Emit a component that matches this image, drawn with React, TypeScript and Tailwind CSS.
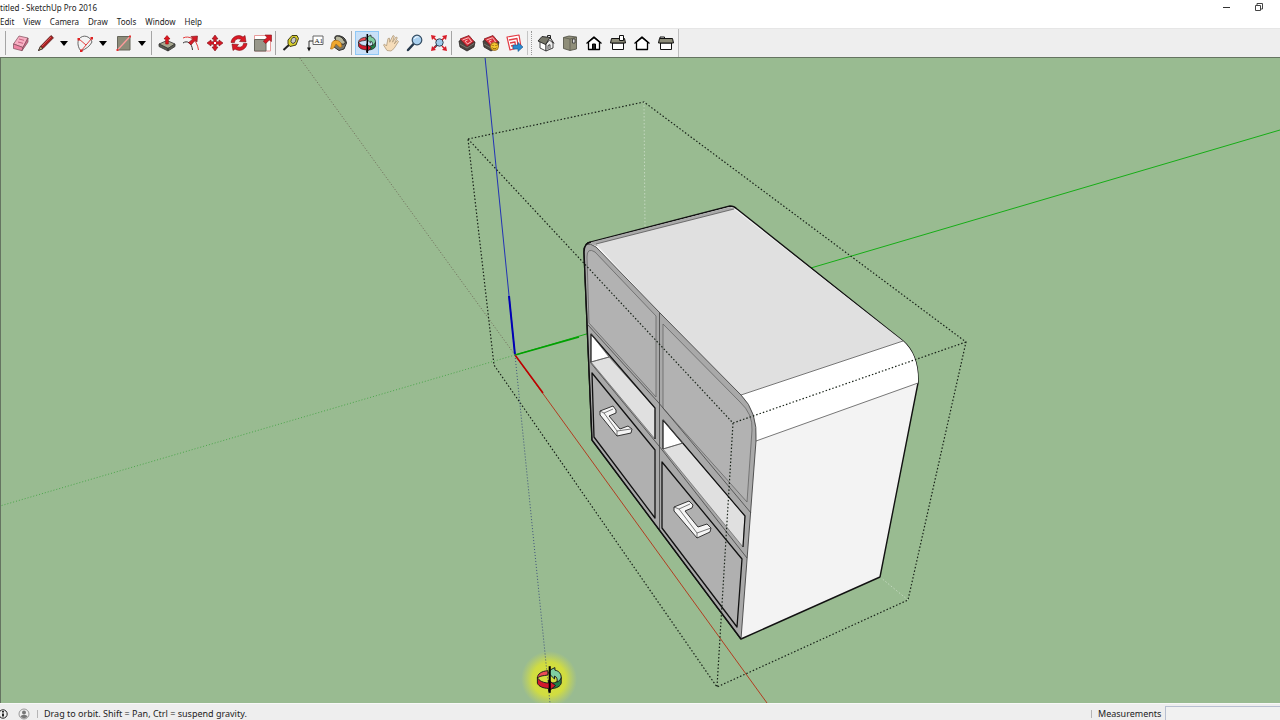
import type { ReactNode } from "react";

const menus = ["Edit", "View", "Camera", "Draw", "Tools", "Window", "Help"];

type ToolProps = { label: string; active?: boolean; children: ReactNode };

function Tool({ label, active, children }: ToolProps) {
  return (
    <button
      aria-label={label}
      className={
        active
          ? "h-6 w-6 shrink-0 border border-[#90c8f6] bg-[#c9e0f7]"
          : "h-6 w-6 shrink-0 border border-transparent hover:bg-[#d8e6f2]"
      }
    >
      <svg viewBox="1 1 22 22" className="block h-full w-full" fill="none" strokeLinejoin="round">
        {children}
      </svg>
    </button>
  );
}

function DropArrow({ label }: { label: string }) {
  return (
    <button aria-label={label} className="flex h-6 w-3 shrink-0 items-center justify-center">
      <svg viewBox="0 0 8 5" className="h-[5px] w-2">
        <path d="M0 0h8L4 5Z" fill="#000" />
      </svg>
    </button>
  );
}

function Divider() {
  return (
    <div className="flex h-6 w-1 shrink-0">
      <div className="h-6 w-px bg-[#a5a5a5]" />
    </div>
  );
}

function OrbitGlyph() {
  return (
    <g stroke="#1c1c1c" strokeWidth=".7">
      <path d="M20.500 11v4c-.5 2.500-3.500 3.800-7 4v-3.800c3-.3 6-1.500 7-4.200Z" fill="#238048" />
      <path d="M13 5.500 16 4v1.800c2.800.6 4.500 2.500 4.500 5.200-.3 1.600-1.500 2.700-3 3.300 .5-2-.2-3.800-1.800-4.200v2L11.500 8Z" fill="#7fd0a2" />
      <path d="M11 6.200C6.500 6.500 3.500 8.500 3.500 11.500c1-1.200 4-1.800 5-1.800l2.500-.5Z" fill="#ee4b55" />
      <path d="M3.500 11v4.200c1 2.300 4 3.500 8 3.700V21l5-4.200-5-3.800v2C8 15 4.500 13.500 3.500 11Z" fill="#d3182c" />
      <path d="M12.300 3v19" stroke="#000" strokeWidth="1.500" />
    </g>
  );
}

function HouseView({ open }: { open?: boolean }) {
  return (
    <g stroke="#000" strokeWidth="1.300">
      <path d="M6.500 11v7.500h11V11L12 6.500Z" fill="#fff" />
      <path d="M4.500 12.500 12 6l7.500 6.500" />
      {open && <path d="M10.500 18.500V13h3v5.500Z" fill="#222" strokeWidth="1" />}
    </g>
  );
}

function SideView({ chimney }: { chimney?: boolean }) {
  return (
    <g stroke="#111" strokeWidth="1">
      <path d="M6.500 12h11v6.500h-11Z" fill="#fff" />
      <path d="M5.500 7.500h13l1 4.500h-15Z" fill="#8d8c79" />
      {chimney ? <path d="M13.500 4.500h4v5h-4Z" fill="#fff" /> : <path d="M6 7.500V6h4.500v1.500" />}
    </g>
  );
}

function WarehouseBox() {
  return (
    <g>
      <path d="m4 10 9-3 7 4-1 5-7 4-7-4Z" fill="#4a4540" stroke="#2a2624" strokeWidth=".8" />
      <path d="m5 8 9-3.500 5 6-7 5Z" fill="#d9303a" stroke="#7e1a20" strokeWidth=".8" />
      <path d="m7.500 9 6-2.300 3 3.800-4 2.500-2.500-2.800 2.500-1" stroke="#ffd3d3" strokeWidth=".9" />
      <path d="m5 13 7 4 7-4.500" stroke="#8b867e" strokeWidth=".7" />
    </g>
  );
}

function Toolbar() {
  return (
    <div className="flex h-[29px] shrink-0 border-t border-[#e6e6e6] bg-[#eee]">
      <div className="flex items-center border-r border-[#bdbdbd] bg-[#f3f3f3] pl-[5px]">
        <Divider />
        <Tool label="Eraser">
          <path d="m4.500 13 5.500-8 9 2-5 9.500Z" fill="#f8afc3" stroke="#7c4a58" strokeWidth=".7" />
          <path d="M4.500 13v4.500l8.500 2.200 1-3.200Z" fill="#f084a4" stroke="#7c4a58" strokeWidth=".7" />
          <path d="m14 16.500-1 3.200L19 11V7Z" fill="#d66f90" stroke="#7c4a58" strokeWidth=".7" />
          <path d="m10 8 5 1.300M9 11l5 1.300" stroke="#b94c6e" strokeWidth=".8" />
        </Tool>
        <div className="flex pl-px">
          <Tool label="Line">
            <path d="m4.500 19.500 2-4.200L17 4.500l2.500 2.300L9 17.500Z" fill="#a92020" stroke="#411" strokeWidth=".7" />
            <path d="m4.500 19.500 2-4.200L9 17.500Z" fill="#ceb178" stroke="#222" strokeWidth=".7" />
            <path d="m8 15 9-9" stroke="#e66" strokeWidth=".7" />
          </Tool>
          <DropArrow label="Line tools" />
        </div>
        <div className="flex pl-[3px]">
          <Tool label="Arc">
            <path d="M6 8c4-5 11-3 13 3-2 4-6 7-11 9" stroke="#444" strokeWidth=".8" />
            <path d="M6 8c-2 3-1 9 2 12" stroke="#444" strokeWidth=".8" />
            <path d="M19 7 8 20M6 8l7 6" stroke="#e34040" />
            <path d="M4.500 7H7v2.500H4.500ZM17.500 6H20v2.500h-2.500ZM7 18.500h2.500V21H7Z" fill="#d22" />
          </Tool>
          <DropArrow label="Arc tools" />
        </div>
        <div className="flex pl-[3px]">
          <Tool label="Rectangle">
            <path d="M5.500 5.500H18V19H5.500Z" fill="#8d8c79" stroke="#66665b" />
            <path d="M5.500 19 18 5.500" stroke="#ff9b9b" strokeWidth="1.300" />
            <path d="M4.500 18h2v2h-2ZM17 4.500h2v2h-2Z" fill="#e43131" />
          </Tool>
          <DropArrow label="Shape tools" />
        </div>
        <div className="pl-[3px]">
          <Divider />
        </div>

        <Tool label="Push/Pull">
          <path d="m4 13 8-3.500 8 3.500-7 4.500Z" fill="#a7a78f" stroke="#333" strokeWidth=".8" />
          <path d="M4 13v2.500l9 4.500v-2.500ZM20 13v2.500L13 20v-2.500Z" fill="#5c5d50" stroke="#333" strokeWidth=".8" />
          <path d="m12 4.500 3 3.500h-1.700v5h-2.600V8H9Z" fill="#e01722" stroke="#900" strokeWidth=".6" />
        </Tool>
        <Tool label="Offset">
          <path d="M4 7c6-3 14 1 15.500 12" stroke="#e33b3b" strokeWidth="1" />
          <path d="M4 12c4-3 9 0 9.500 7" stroke="#333" strokeWidth="1" />
          <path d="m18.500 5-.5 6-2-1.500-4 4.500-2.500-2.300 4.500-4L12 5.500Z" fill="#d51c26" stroke="#7a1018" strokeWidth=".6" />
        </Tool>
        <Tool label="Move">
          <path d="m12 4 3 4h-1.700v2.700H16V9l4 3-4 3v-1.700h-2.700V16H15l-3 4-3-4h1.700v-2.700H8V15l-4-3 4-3v1.700h2.700V8H9Z" fill="#d61925" stroke="#7d1118" strokeWidth=".6" />
          <path d="M11 11h2v2h-2Z" fill="#fff" />
        </Tool>
        <Tool label="Rotate">
          <path d="M4 11.500C4.500 6 11 2.500 16 6l2-1.500 1 6.500-6.500-.5 1.800-2C11 7 8 8 7.500 11.500Z" fill="#da1925" stroke="#801218" strokeWidth=".6" />
          <path d="M20 12.500C19.500 18 13 21.500 8 18l-2 1.500L5 13l6.500.5-1.800 2C13 17 16 16 16.500 12.500Z" fill="#da1925" stroke="#801218" strokeWidth=".6" />
        </Tool>
        <Tool label="Scale">
          <path d="M3.500 4.500h16v15.500h-16Z" stroke="#e79a9a" fill="#fff" />
          <path d="M3.500 8.500H15V20H3.500Z" fill="#98978a" stroke="#66665c" />
          <path d="M20.500 4v6.500L18.300 9l-3.500 3.500-2.500-2.300L16 6.500 14 4Z" fill="#d61a25" stroke="#831118" strokeWidth=".6" />
        </Tool>
        <Divider />

        <Tool label="Tape Measure">
          <path d="m11 13-6.500 6" stroke="#222" strokeWidth="2" />
          <path d="m9 9 4-4.500h5l1.500 3-2.500 6.500-6 1.500L9 13Z" fill="#d9cf2c" stroke="#33300c" strokeWidth=".9" />
          <ellipse cx="14.500" cy="9.300" rx="2.300" ry="3.200" transform="rotate(25 14.500 9.300)" fill="#c9c9c4" stroke="#333" strokeWidth=".8" />
        </Tool>
        <Tool label="Text">
          <path d="M10 5h10v8.500H10Z" fill="#fff" stroke="#666" />
          <path d="M10 10H6v7" stroke="#333" />
          <path d="m4 16.500 2 4 2-4Z" fill="#111" />
          <text x="11.500" y="11.800" fontSize="7" fontFamily="Liberation Serif, serif" fill="#111">A1</text>
        </Tool>
        <Tool label="Paint Bucket">
          <path d="m7 10 5-5c4 0 7 3 7.500 7L17 18l-5 1.500L7 16Z" fill="#77766a" stroke="#222" strokeWidth=".9" />
          <ellipse cx="13" cy="9" rx="6" ry="3" transform="rotate(35 13 9)" fill="#b7b69d" stroke="#222" strokeWidth=".9" />
          <path d="M14 12c-2-3-7-4-9-.5L3.500 18c3.500.5 4-2.500 5.500-5l4 3.500 2-1Z" fill="#efa72d" stroke="#a26512" strokeWidth=".6" />
          <path d="M8 8c1-5 7-4 9 2" stroke="#333" strokeWidth=".9" />
        </Tool>
        <Divider />

        <Tool label="Orbit" active>
          <OrbitGlyph />
        </Tool>
        <Tool label="Pan">
          <path d="M8 19.500 4.500 14c.5-1.500 2-.5 3 1L9 7.500l1.500-.3.2 4L14 4.500l1.300.7-1.800 6L17 6l1.300.7-3 6.200 3-3.400 1.200 1-4.500 7-3 2.500Z" fill="#f5dcb9" stroke="#b09a7c" strokeWidth=".8" />
        </Tool>
        <Tool label="Zoom">
          <path d="m5 19 5.500-6" stroke="#26394c" strokeWidth="2.500" strokeLinecap="round" />
          <circle cx="14" cy="9" r="4.800" fill="#a9d0ef" stroke="#344c62" strokeWidth="1.200" />
          <path d="M11.500 8c.5-2 2-2.500 4-2" stroke="#fff" />
        </Tool>
        <Tool label="Zoom Extents">
          <path d="m7 17 4-4" stroke="#31495c" strokeWidth="2" />
          <circle cx="12.500" cy="11.500" r="3.700" fill="#9fcbeb" stroke="#345" />
          <path d="m4 4 5 1-1.500 1.500 2 2-1 1-2-2L5 9ZM20 4l-5 1 1.500 1.500-2 2 1 1 2-2L19 9ZM4 20l1-5 1.500 1.500 2-2 1 1-2 2L9 19ZM20 20l-5-1 1.500-1.500-2-2 1-1 2 2L19 15Z" fill="#d81d29" />
        </Tool>
        <Divider />

        <Tool label="3D Warehouse">
          <WarehouseBox />
        </Tool>
        <Tool label="Share Model">
          <WarehouseBox />
          <circle cx="15.500" cy="15.500" r="4" fill="#f5c52f" stroke="#8b5d13" strokeWidth=".8" />
          <path d="M14 14v1M17 14v1M13.500 16.800c1 1.300 3 1.300 4 0" stroke="#553300" strokeWidth=".8" />
        </Tool>
        <Tool label="Extension Warehouse">
          <path d="m4 6 12-2 2 12-11 3Z" fill="#fff" stroke="#e33c45" strokeWidth="1.200" />
          <path d="m6 9 8-1.500 1 7M7 12l5-1 .5 6M8 15l2-.5.5 3.500" stroke="#e33c45" strokeWidth="1.300" />
          <path d="M10 14h5v-2.500l5 4.500-5 4.500V18h-5Z" fill="#2b89cf" stroke="#17568a" strokeWidth=".6" />
        </Tool>
        <div className="flex h-6 w-[7px] shrink-0 justify-between pr-0.5">
          <div className="w-px bg-[#c5c5c5]" />
          <div className="w-px border-l border-dotted border-[#999]" />
        </div>

        <Tool label="Iso View">
          <path d="m6 10 6 3v7l-6-3Z" fill="#fff" stroke="#333" strokeWidth=".9" />
          <path d="m12 13 3.500-4 3.500 3v5l-7 3Z" fill="#eee" stroke="#333" strokeWidth=".9" />
          <path d="m4 10 4-4.500 8 1-4.500 7Z" fill="#77776a" stroke="#222" strokeWidth=".9" />
          <path d="m16 6.500 4 6M13.500 6V4.500h3V8" stroke="#222" strokeWidth="1" />
          <path d="m14 18.500v-4l2-.8v4" stroke="#333" strokeWidth=".9" />
        </Tool>
        <Tool label="Top View">
          <path d="M5.500 6.500 11 5l7.500 1v12L12 19.500l-6.500-2Z" fill="#8f8e79" stroke="#4c4c41" strokeWidth=".8" />
          <path d="M12 8v11.500M5.500 6.500 12 8l6.500-2" stroke="#5e5e50" strokeWidth=".8" />
          <path d="M14.500 8h2.500v4h-2.500Z" fill="#ddd" stroke="#333" strokeWidth=".8" />
        </Tool>
        <Tool label="Front View">
          <HouseView open />
        </Tool>
        <Tool label="Right View">
          <SideView chimney />
        </Tool>
        <Tool label="Back View">
          <HouseView />
        </Tool>
        <Tool label="Left View">
          <SideView />
        </Tool>
      </div>
    </div>
  );
}

function Cabinet() {
  return (
    <g strokeLinejoin="round">
      {/* outer shell */}
      <path d="M592 440 584 252Q584 243 591 242L730 206Q734 206 737 209L903 341Q919 355 918 383L880 577 741 639Z" fill="#f3f3f3" stroke="#111" strokeWidth="1.400" />
      <path d="M588 243 730 207 735 209 597 246Z" fill="#aaa" />
      <path d="M596 244 734 209 903 341 741 395 660 313Z" fill="#e0e0e0" />
      <path d="M741 395 903 341Q919 355 918 383L756 441Q757 413 741 395Z" fill="#fff" />
      <path d="M596 244 734 209M741 395 903 341M756 441 918 383" stroke="#555" strokeWidth=".8" fill="none" />

      {/* front frame */}
      <path d="M592 440 584 252Q584 239 596 247L660 313 741 395Q758 412 756 441L741 639Z" fill="#a9a9a9" stroke="#444" strokeWidth=".9" />
      <g fill="#b2b2b2" stroke="#666" strokeWidth=".8">
        <path d="M589 323 587 257Q587 247 595 252L656 316V397Z" />
        <path d="M663 324 740 402Q753 414 752 430L747 502 663 408Z" />
      </g>
      <path d="M659.500 313V530M588 325 658 402 751 513M590 362 659 446 747 558" stroke="#444" strokeWidth=".8" fill="none" />

      {/* open shelves */}
      <path d="M591 334 609 357 591 362ZM663 420 683 443 663 449Z" fill="#fff" />
      <path d="M591 362 609 357 655 408V439ZM663 449 683 443 745 516 743 547Z" fill="#e0e0e0" stroke="#666" strokeWidth=".7" />
      <path d="M591 362V334L655 408V439M663 449V420L745 516 743 547" fill="none" stroke="#111" strokeWidth="1.200" />
      <path d="M591 334 609 357 591 362M663 420 683 443 663 449" fill="none" stroke="#555" strokeWidth=".7" />

      {/* drawers */}
      <path d="M592 373 655 450V518L594 437ZM662 462 742 559 737 627 662 528Z" fill="#b0b0b0" stroke="#111" strokeWidth="1.300" />
      <path d="M592 440 584 252Q584 243 591 242M592 440 741 639" fill="none" stroke="#111" strokeWidth="1.400" />

      {/* handles */}
      <g fill="#f5f5f5" stroke="#222" strokeWidth=".9">
        <path d="M600 411 613 406 616 410V413L609 416 620 429 628 426 632 429 631 433 617 436 600 415Z" />
        <path d="M600 411 604 413 613 409M604 413 617 431 631 429M617 431V436" fill="none" strokeWidth=".6" />
        <path d="M674 507 689 501 693 505 692 508 685 511 698 527 707 524 711 528 710 532 697 538 674 511Z" />
        <path d="M674 507 679 509 690 504M679 509 697 533 711 528M697 533V538" fill="none" strokeWidth=".6" />
      </g>
    </g>
  );
}

function Viewport() {
  return (
    <main className="min-h-0 flex-1 border-t border-l border-[#657461] bg-[#99bb91]">
      <svg
        viewBox="1 58 1279 645"
        preserveAspectRatio="xMidYMid slice"
        className="block h-full w-full"
        role="img"
        aria-label="Model of a cabinet with two drawers"
      >
        <defs>
          <radialGradient id="halo">
            <stop offset="0" stopColor="#d9e33b" />
            <stop offset=".6" stopColor="#d0dc41" />
            <stop offset="1" stopColor="#c5d65a" stopOpacity="0" />
          </radialGradient>
        </defs>

        {/* axes */}
        <g fill="none" strokeWidth="1">
          <path d="M515 355 485 57" stroke="#2233b5" />
          <path d="M515 355 1280 130" stroke="#16ad16" />
          <path d="M515 355 767 703" stroke="#b23c20" />
          <path d="M515 355 509 296" stroke="#0000b4" strokeWidth="2" />
          <path d="M515 355 579 337" stroke="#00a000" strokeWidth="1.600" />
          <path d="M515 355 543 393" stroke="#bd0000" strokeWidth="1.600" />
          <g strokeDasharray="1 2">
            <path d="M515 355 299 57" stroke="#6f6958" />
            <path d="M515 355 0 506" stroke="#4aa64a" />
          </g>
        </g>

        <path d="M644 102 645 229M880 577 908 600" stroke="#c4d8bf" strokeDasharray="1.500 2" />
        <Cabinet />

        {/* selection bounds */}
        <path
          d="M468 139 644 102 966 342 908 600 717 687 494 365ZM468 139 733 423 966 342M733 423 717 687"
          fill="none"
          stroke="#182218"
          strokeWidth="1.200"
          strokeDasharray="1.500 2"
        />

        {/* orbit cursor */}
        <circle cx="549" cy="679" r="28" fill="url(#halo)" />
        <path d="M515 355 550 703" stroke="#3f527c" strokeDasharray="1 2" />
        <g transform="translate(532.500 662) scale(1.400)">
          <OrbitGlyph />
        </g>
      </svg>
    </main>
  );
}

function StatusBar() {
  return (
    <footer className="flex h-[17px] shrink-0 items-center border-t border-[#f8f8f8] bg-[#eee] pt-1 text-[9px] leading-3 text-[#222]">
      <button aria-label="Model info" className="w-2 shrink-0 overflow-hidden">
        <svg viewBox="2 0 8 10" className="h-2.5 w-2" fill="none">
          <circle cx="5" cy="5" r="4.200" stroke="#222" />
          <path d="M5 4.500v3M5 2v1.500" stroke="#111" strokeWidth="1.800" />
        </svg>
      </button>
      <button aria-label="Sign in" className="ml-2.5 shrink-0">
        <svg viewBox="0 0 12 12" className="h-3 w-3" fill="none">
          <circle cx="6" cy="6" r="5" stroke="#999" />
          <circle cx="6" cy="4.500" r="2" fill="#777" />
          <path d="M2.500 9C3 6 9 6 9.500 9L6 10.500Z" fill="#777" />
        </svg>
      </button>
      <div className="mr-1.5 ml-[7px] h-2 w-px bg-[#b5b5b5]" />
      <span>Drag to orbit. Shift = Pan, Ctrl = suspend gravity.</span>
      <div className="ml-auto h-2 w-px bg-[#b5b5b5]" />
      <label htmlFor="measurements" className="w-[73px] pl-1.5">
        Measurements
      </label>
      <input id="measurements" className="h-4 w-[115px] border border-r-0 border-[#b7bfd0] bg-[#f1f1f1] px-1 outline-none" />
    </footer>
  );
}

export default function App() {
  return (
    <div className="flex h-screen flex-col overflow-hidden bg-white font-['Noto_Sans','Open_Sans',sans-serif] text-[#222]">
      <header className="flex h-4 shrink-0 items-center justify-between text-[8px] leading-4">
        <h1>titled - SketchUp Pro 2016</h1>
        <div className="flex gap-6 pr-[17px]">
          <button aria-label="Minimize" className="h-3 w-2">
            <svg viewBox="0 0 8 12" className="h-3 w-2">
              <path d="M0 5.500h7" stroke="#333" />
            </svg>
          </button>
          <button aria-label="Restore" className="h-3 w-2">
            <svg viewBox="0 0 8 12" className="h-3 w-2" fill="none" stroke="#444">
              <path d="M.5 3.500h5v5h-5ZM2 3.500v-2h5.500V7H5.500" />
            </svg>
          </button>
        </div>
      </header>
      <nav className="flex h-3 shrink-0 items-center gap-[9px] text-[8px] leading-3">
        {menus.map((menu) => (
          <button key={menu}>{menu}</button>
        ))}
      </nav>
      <Toolbar />
      <Viewport />
      <StatusBar />
    </div>
  );
}
